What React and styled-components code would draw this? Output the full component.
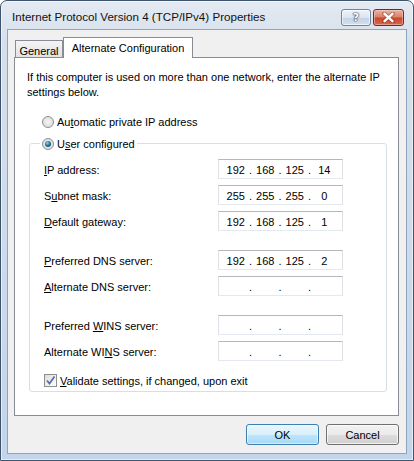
import { createGlobalStyle, styled } from 'styled-components'

const GlobalStyle = createGlobalStyle`
  html, body {
    margin: 0;
    padding: 0;
    background: #fff;
  }
  body {
    font-family: 'Liberation Sans', Arial, sans-serif;
    font-size: 11px;
    color: #000;
  }
  * {
    box-sizing: border-box;
  }
`

const fields = [
  [
    { key: 'I', rest: 'P address:', value: ['192', '168', '125', '14'] },
    { pre: 'S', key: 'u', rest: 'bnet mask:', value: ['255', '255', '255', '0'] },
    { key: 'D', rest: 'efault gateway:', value: ['192', '168', '125', '1'] },
  ],
  [
    { key: 'P', rest: 'referred DNS server:', value: ['192', '168', '125', '2'] },
    { key: 'A', rest: 'lternate DNS server:', value: ['', '', '', ''] },
  ],
  [
    { pre: 'Preferred ', key: 'W', rest: 'INS server:', value: ['', '', '', ''] },
    { pre: 'Alternate WI', key: 'N', rest: 'S server:', value: ['', '', '', ''] },
  ],
]

function Radio({ checked }) {
  return <RadioCircle $checked={checked} />
}

function IpBox({ value }) {
  return (
    <IpField>
      {value.map((part, i) => (
        <IpPart key={i}>
          <IpSegment>{part}</IpSegment>
          {i < 3 && <IpDot>.</IpDot>}
        </IpPart>
      ))}
    </IpField>
  )
}

function App() {
  return (
    <>
      <GlobalStyle />
      <Window>
        <TitleBar>
          <Title>Internet Protocol Version 4 (TCP/IPv4) Properties</Title>
          <CaptionButtons>
            <HelpButton>?</HelpButton>
            <CloseButton>
              <svg width='13' height='11' viewBox='0 0 13 11'>
                <path
                  d='M2 1.5 L11 9.5 M11 1.5 L2 9.5'
                  stroke='#5b1a0e'
                  strokeWidth='4'
                  strokeLinecap='round'
                  opacity='0.35'
                />
                <path
                  d='M2.5 1.8 L10.5 9.2 M10.5 1.8 L2.5 9.2'
                  stroke='#fff'
                  strokeWidth='2.4'
                  strokeLinecap='round'
                />
              </svg>
            </CloseButton>
          </CaptionButtons>
        </TitleBar>

        <Client>
          <TabRow>
            <Tab>General</Tab>
            <Tab $active>Alternate Configuration</Tab>
          </TabRow>

          <Panel>
            <Intro>
              If this computer is used on more than one network, enter the alternate IP
              <br />
              settings below.
            </Intro>

            <RadioRow>
              <Radio />
              <span>
                Au<Key>t</Key>omatic private IP address
              </span>
            </RadioRow>

            <GroupBox>
              <Legend>
                <Radio checked />
                <span>
                  U<Key>s</Key>er configured
                </span>
              </Legend>

              <Groups>
                {fields.map((group, g) => (
                  <FieldGroup key={g}>
                    {group.map((f, i) => (
                      <FieldRow key={i}>
                        <FieldLabel>
                          {f.pre}
                          <Key>{f.key}</Key>
                          {f.rest}
                        </FieldLabel>
                        <IpBox value={f.value} />
                      </FieldRow>
                    ))}
                  </FieldGroup>
                ))}
              </Groups>

              <CheckRow>
                <CheckBox>
                  <svg width='11' height='11' viewBox='0 0 11 11'>
                    <path
                      d='M2 5.5 L4.5 8.5 L9.5 1.5'
                      fill='none'
                      stroke='#5a6ea3'
                      strokeWidth='1.7'
                    />
                  </svg>
                </CheckBox>
                <span>
                  <Key>V</Key>alidate settings, if changed, upon exit
                </span>
              </CheckRow>
            </GroupBox>
          </Panel>

          <ButtonRow>
            <Button $default>OK</Button>
            <Button>Cancel</Button>
          </ButtonRow>
        </Client>
      </Window>
    </>
  )
}

export default App

const Window = styled.div`
  width: 414px;
  height: 461px;
  display: flex;
  flex-direction: column;
  border: 1px solid #3e546d;
  border-radius: 7px 7px 0 0;
  background: linear-gradient(to bottom, #e4eaf2 0, #d6e0ec 40px, #c3d5ea 100%);
  box-shadow: inset 0 0 0 1px rgba(255, 255, 255, 0.55);
`

const TitleBar = styled.div`
  height: 28px;
  display: flex;
  align-items: center;
  padding: 3px 9px 0 11px;
`

const Title = styled.div`
  flex: 1;
  font-size: 11.6px;
  color: #111;
  white-space: nowrap;
`

const CaptionButtons = styled.div`
  display: flex;
  gap: 2px;
  margin-top: 2px;
`

const HelpButton = styled.div`
  width: 30px;
  height: 17px;
  border: 1px solid #70849c;
  border-radius: 3px;
  background: linear-gradient(to bottom, #eef3f8 0, #dbe5f0 50%, #c3d2e3 51%, #d3e0ee 100%);
  box-shadow: inset 0 0 0 1px rgba(255, 255, 255, 0.6);
  display: flex;
  align-items: center;
  justify-content: center;
  font-family: 'DejaVu Sans', sans-serif;
  font-weight: bold;
  font-size: 11px;
  color: #fff;
  text-shadow: 0 0 1px #2b4360, 0 0 1px #2b4360, 0 0 2px #2b4360;
`

const CloseButton = styled.div`
  width: 31px;
  height: 17px;
  border: 1px solid #6e2c1f;
  border-radius: 3px;
  background: linear-gradient(to bottom, #eab3a4 0, #dc7f69 48%, #c9462c 52%, #d5694c 100%);
  box-shadow: inset 0 0 0 1px rgba(255, 220, 210, 0.45);
  display: flex;
  align-items: center;
  justify-content: center;
`

const Client = styled.div`
  flex: 1;
  margin: 0 6px 6px;
  border: 1px solid #8fa3bb;
  background: #f0f0f0;
  display: flex;
  flex-direction: column;
  padding: 7px 0 8px;
`

const TabRow = styled.div`
  display: flex;
  align-items: flex-end;
  height: 21px;
  margin: 0 0 -1px 7px;
  position: relative;
  z-index: 1;
`

const Tab = styled.div`
  height: ${(p) => (p.$active ? '21px' : '17px')};
  width: ${(p) => (p.$active ? '130px' : '48px')};
  margin-bottom: ${(p) => (p.$active ? '0' : '1px')};
  border: 1px solid #898c95;
  border-bottom: none;
  background: ${(p) => (p.$active ? '#fff' : 'linear-gradient(to bottom, #f4f4f4, #e2e2e2)')};
  display: flex;
  align-items: center;
  justify-content: center;
  padding-top: ${(p) => (p.$active ? '0' : '3px')};
  white-space: nowrap;
`

const Panel = styled.div`
  height: 359px;
  margin: 0 7px 0 6px;
  border: 1px solid #898c95;
  background: #fff;
  padding: 12px 11px 0 12px;
`

const Intro = styled.p`
  margin: 0;
  line-height: 15px;
  white-space: nowrap;
`

const Key = styled.span`
  text-decoration: underline;
`

const RadioRow = styled.div`
  display: flex;
  align-items: center;
  gap: 3px;
  height: 15px;
  margin: 14px 0 0 15px;
`

const RadioCircle = styled.span`
  width: 12px;
  height: 12px;
  flex: none;
  border-radius: 50%;
  border: 1px solid #8e8f8f;
  background: radial-gradient(circle at 50% 50%, #f6f6f6 0, #e4e4e4 55%, #d2d2d2 100%);
  display: flex;
  align-items: center;
  justify-content: center;

  &::after {
    content: '';
    display: ${(p) => (p.$checked ? 'block' : 'none')};
    width: 6px;
    height: 6px;
    border-radius: 50%;
    background: radial-gradient(circle at 40% 35%, #8fd6f2 0, #1f6c93 50%, #0f3a55 100%);
  }
`

const GroupBox = styled.fieldset`
  margin: 7px 0 0 2px;
  padding: 0 0 3px 14px;
  border: 1px solid #d5dfe5;
  border-radius: 3px;
  min-width: 0;
`

const Legend = styled.legend`
  display: flex;
  align-items: center;
  gap: 3px;
  height: 15px;
  margin-left: -4px;
  padding: 0 2px;
`

const Groups = styled.div`
  display: flex;
  flex-direction: column;
  gap: 19px;
  margin-top: 8px;
`

const FieldGroup = styled.div`
  display: flex;
  flex-direction: column;
  gap: 6px;
`

const FieldRow = styled.div`
  display: grid;
  grid-template-columns: 174px 125px;
  align-items: center;
  height: 20px;
`

const FieldLabel = styled.span`
  padding-top: 1px;
`

const IpField = styled.div`
  height: 20px;
  border: 1px solid;
  border-color: #b4b7bd #dfe1e6 #e3e9ef #dfe1e6;
  display: flex;
  align-items: center;
  padding: 1px 0 0 4px;
`

const IpPart = styled.div`
  display: flex;
  align-items: center;
`

const IpSegment = styled.span`
  width: 25.5px;
  text-align: center;
`

const IpDot = styled.span`
  width: 4px;
  text-align: center;
`

const CheckRow = styled.div`
  display: flex;
  align-items: center;
  gap: 3px;
  height: 15px;
  margin-top: 12px;
`

const CheckBox = styled.span`
  width: 13px;
  height: 13px;
  flex: none;
  border: 1px solid #8e8f8f;
  background: linear-gradient(135deg, #dcdcdc 0, #f4f4f4 70%, #fbfbfb 100%);
  display: flex;
  align-items: center;
  justify-content: center;
`

const ButtonRow = styled.div`
  display: flex;
  justify-content: flex-end;
  gap: 7px;
  margin-top: 8px;
  padding-right: 7px;
`

const Button = styled.div`
  width: 73px;
  height: 21px;
  border: 1px solid ${(p) => (p.$default ? '#3c7fb1' : '#707070')};
  border-radius: 3px;
  background: ${(p) =>
    p.$default
      ? 'linear-gradient(to bottom, #eaf6fd 0, #d9f0fc 50%, #bee6fd 51%, #a7d9f5 100%)'
      : 'linear-gradient(to bottom, #f2f2f2 0, #ebebeb 50%, #dddddd 51%, #cfcfcf 100%)'};
  box-shadow: inset 0 0 0 1px ${(p) => (p.$default ? 'rgba(255,255,255,0.5)' : 'rgba(255,255,255,0.7)')};
  display: flex;
  align-items: center;
  justify-content: center;
`
